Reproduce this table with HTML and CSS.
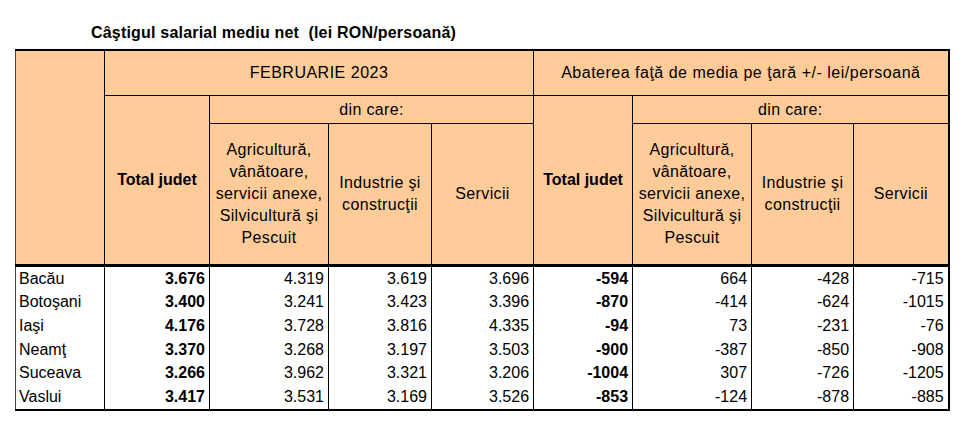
FILE: index.html
```html
<!DOCTYPE html>
<html lang="ro">
<head>
<meta charset="utf-8">
<title>Câştigul salarial mediu net</title>
<link rel="stylesheet" href="styles.css">
</head>
<body>
<div class="page">
  <h1 class="title">Câştigul salarial mediu net&nbsp; (lei RON/persoană)</h1>
  <table class="salary">
    <colgroup>
      <col class="c-name">
      <col class="c-total">
      <col class="c-agri">
      <col class="c-ind">
      <col class="c-serv">
      <col class="c-total2">
      <col class="c-agri2">
      <col class="c-ind2">
      <col class="c-serv2">
    </colgroup>
    <thead>
      <tr class="r1">
        <th rowspan="3" class="blank"></th>
        <th colspan="4" class="group">FEBRUARIE 2023</th>
        <th colspan="4" class="group">Abaterea faţă de media pe ţară +/- lei/persoană</th>
      </tr>
      <tr class="r2">
        <th rowspan="2" class="tot">Total judet</th>
        <th colspan="3" class="sub">din care:</th>
        <th rowspan="2" class="tot">Total judet</th>
        <th colspan="3" class="sub">din care:</th>
      </tr>
      <tr class="r3">
        <th class="cat">Agricultură,<br>vânătoare,<br>servicii anexe,<br>Silvicultură şi<br>Pescuit</th>
        <th class="cat">Industrie şi<br>construcţii</th>
        <th class="cat">Servicii</th>
        <th class="cat">Agricultură,<br>vânătoare,<br>servicii anexe,<br>Silvicultură şi<br>Pescuit</th>
        <th class="cat">Industrie şi<br>construcţii</th>
        <th class="cat">Servicii</th>
      </tr>
    </thead>
    <tbody>
      <tr><td class="name">Bacău</td><td class="bold">3.676</td><td>4.319</td><td>3.619</td><td>3.696</td><td class="bold">-594</td><td>664</td><td>-428</td><td>-715</td></tr>
      <tr><td class="name">Botoşani</td><td class="bold">3.400</td><td>3.241</td><td>3.423</td><td>3.396</td><td class="bold">-870</td><td>-414</td><td>-624</td><td>-1015</td></tr>
      <tr><td class="name">Iaşi</td><td class="bold">4.176</td><td>3.728</td><td>3.816</td><td>4.335</td><td class="bold">-94</td><td>73</td><td>-231</td><td>-76</td></tr>
      <tr><td class="name">Neamţ</td><td class="bold">3.370</td><td>3.268</td><td>3.197</td><td>3.503</td><td class="bold">-900</td><td>-387</td><td>-850</td><td>-908</td></tr>
      <tr><td class="name">Suceava</td><td class="bold">3.266</td><td>3.962</td><td>3.321</td><td>3.206</td><td class="bold">-1004</td><td>307</td><td>-726</td><td>-1205</td></tr>
      <tr><td class="name">Vaslui</td><td class="bold">3.417</td><td>3.531</td><td>3.169</td><td>3.526</td><td class="bold">-853</td><td>-124</td><td>-878</td><td>-885</td></tr>
    </tbody>
  </table>
</div>
</body>
</html>
```

FILE: styles.css
```css
html, body {
  margin: 0;
  padding: 0;
  background: #ffffff;
}

.page {
  padding-top: 24px;
  font-family: "Liberation Sans", Arial, sans-serif;
  color: #000;
}

.title {
  margin: 0 0 7px 91px;
  font-size: 16px;
  line-height: 18px;
  font-weight: bold;
  letter-spacing: 0.2px;
}

.salary {
  margin-left: 15px;
  border-collapse: collapse;
  table-layout: fixed;
  width: 934px;
  font-size: 16px;
  border-top: 2px solid #000;
  border-right: 2px solid #000;
  border-bottom: 2px solid #000;
  border-left: 1px solid #444;
}

.c-name { width: 89px; }
.c-total { width: 105px; }
.c-agri { width: 119px; }
.c-ind { width: 103px; }
.c-serv { width: 102px; }
.c-total2 { width: 99px; }
.c-agri2 { width: 119px; }
.c-ind2 { width: 102px; }
.c-serv2 { width: 95px; }

.salary th {
  background: #ffcc99;
  border: 1px solid #000;
  font-weight: normal;
  text-align: center;
  vertical-align: middle;
  padding: 0;
  line-height: 22px;
  letter-spacing: 0.35px;
}

.salary th.group {
  letter-spacing: 0.5px;
}

.salary th.blank {
  border-left: 1px solid #444;
  border-bottom: 3px solid #000;
}

.r1 th { height: 44px; }
.r2 th.sub { height: 27px; }

.salary th.tot {
  font-weight: bold;
  letter-spacing: 0;
  border-bottom: 3px solid #000;
}

.salary th.cat {
  height: 140px;
  border-bottom: 3px solid #000;
}

.salary td {
  border-left: 1px solid #000;
  border-right: 1px solid #000;
  border-top: none;
  border-bottom: none;
  padding: 0 4px 0 2px;
  height: 23.6px;
  line-height: 22px;
  text-align: right;
  white-space: nowrap;
}

.salary td.name {
  text-align: left;
  border-left: 1px solid #444;
  padding-left: 3px;
}

.salary td.bold {
  font-weight: bold;
}
```
